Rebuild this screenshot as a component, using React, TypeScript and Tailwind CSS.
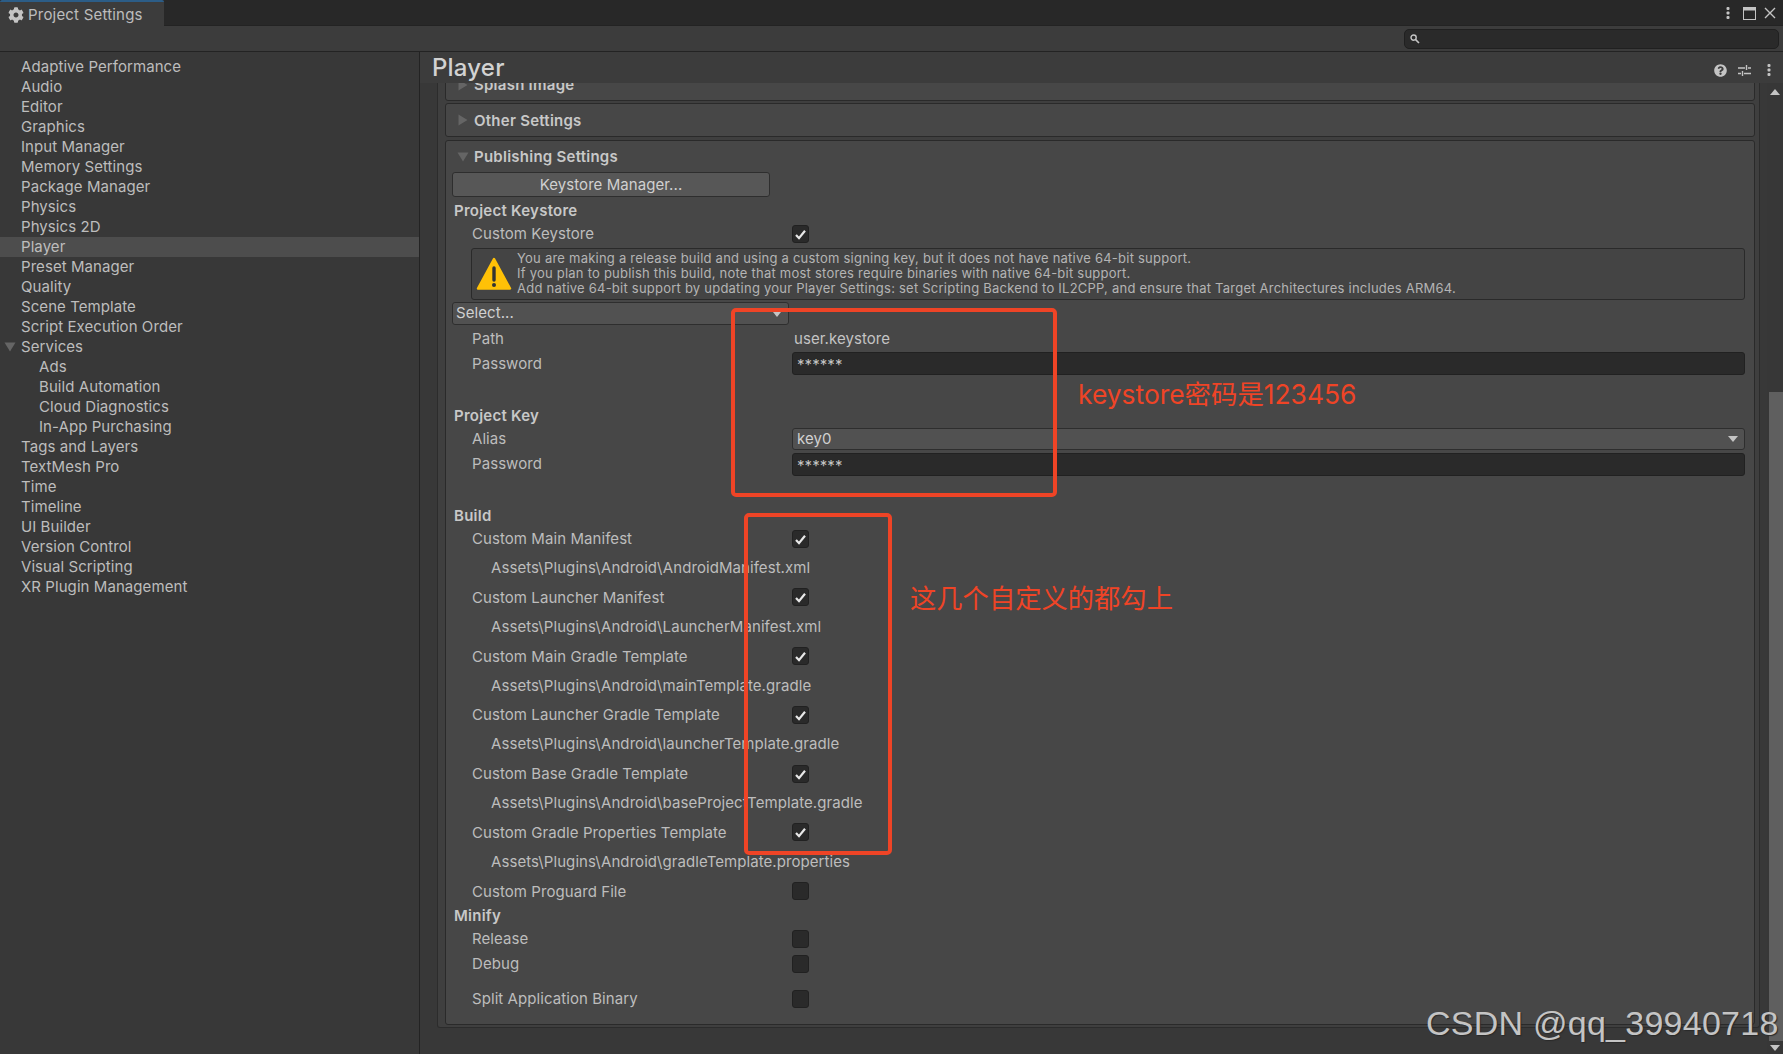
import React from "react";
import { FaCog, FaQuestionCircle } from "react-icons/fa";

const items: [string, number][] = [
  ["Adaptive Performance", 0], ["Audio", 0], ["Editor", 0], ["Graphics", 0], ["Input Manager", 0],
  ["Memory Settings", 0], ["Package Manager", 0], ["Physics", 0], ["Physics 2D", 0], ["Player", 0],
  ["Preset Manager", 0], ["Quality", 0], ["Scene Template", 0], ["Script Execution Order", 0], ["Services", 0],
  ["Ads", 1], ["Build Automation", 1], ["Cloud Diagnostics", 1], ["In-App Purchasing", 1],
  ["Tags and Layers", 0], ["TextMesh Pro", 0], ["Time", 0], ["Timeline", 0], ["UI Builder", 0],
  ["Version Control", 0], ["Visual Scripting", 0], ["XR Plugin Management", 0],
];

const Kebab = () => (
  <svg width="4" height="14" viewBox="0 0 4 14" className="fill-[#c4c4c4]">
    <rect x="0.5" y="1" width="3" height="3" rx="1" />
    <rect x="0.5" y="5.5" width="3" height="3" rx="1" />
    <rect x="0.5" y="10" width="3" height="3" rx="1" />
  </svg>
);

const Tri = ({ open }: { open?: boolean }) => (
  <svg width="12" height="12" viewBox="0 0 12 12" className="fill-[#656565] shrink-0">
    {open ? <path d="M0.5 1.5H11.5L6 10.5Z" /> : <path d="M1.5 0.5V11.5L10.5 6Z" />}
  </svg>
);

const Check = ({ on }: { on?: boolean }) => (
  <div className="w-[17px] h-[18px] rounded-[3px] bg-[#2a2a2a] border border-[#212121] flex items-center justify-center">
    {on && (
      <svg width="13" height="13" viewBox="0 0 13 13" fill="none" stroke="#e8e8e8" strokeWidth="2.2">
        <path d="M2 7L5 10.2L11 2.8" />
      </svg>
    )}
  </div>
);

const Label = ({ children, cls }: { children: React.ReactNode; cls: string }) => (
  <div className={`h-5 flex items-center whitespace-nowrap ${cls}`}>{children}</div>
);

const CheckRow = ({ text, on, cls, tcls = "" }: { text: string; on?: boolean; cls: string; tcls?: string }) => (
  <div className={`h-5 flex items-center ${cls}`}>
    <div className={`w-[340px] shrink-0 pl-[20px] whitespace-nowrap ${tcls}`}>{text}</div>
    <Check on={on} />
  </div>
);

const PathRow = ({ text, cls }: { text: string; cls: string }) => (
  <div className={`h-5 flex items-center pl-[39px] whitespace-nowrap ${cls}`}>{text}</div>
);

const PasswordRow = ({ cls, tcls = "" }: { cls: string; tcls?: string }) => (
  <div className={`h-[23px] flex items-center mr-[9px] ${cls}`}>
    <div className={`w-[340px] shrink-0 pl-[20px] ${tcls}`}>Password</div>
    <div className="flex-1 h-full rounded-[3px] bg-[#2a2a2a] border border-[#212121] pl-[4px] pt-[3px] flex items-start text-[#c4c4c4] text-[15px] leading-[18px]">******</div>
  </div>
);

export default function App() {
  return (
    <div className="relative w-[1783px] h-[1054px] overflow-hidden bg-[#383838] text-[#bdbdbd] text-[15px] tracking-[0.07px] font-['Inter','Noto_Sans_CJK_SC',sans-serif]">
      {/* title bar */}
      <div className="h-[26px] bg-[#282828] border-b border-[#232323] flex items-start justify-between">
        <div className="relative w-[164px] h-[26px] bg-[#3c3c3c] flex items-center pl-[8px] gap-[4px] border-t-[2px] border-[#2c5d87] rounded-t-[2px]">
          <FaCog className="text-[#c4c4c4] w-[16px] h-[16px] mt-[2px]" />
          <span className="text-[15px] tracking-[0.2px] pt-[3px]">Project Settings</span>
        </div>
        <div className="flex items-center h-[26px] pr-[7px]">
          <Kebab />
          <svg width="13" height="13" viewBox="0 0 13 13" className="ml-[13px]" fill="none">
            <rect x="0.5" y="0.5" width="12" height="12" stroke="#c4c4c4" />
            <rect x="0.5" y="0.5" width="12" height="3" fill="#c4c4c4" />
          </svg>
          <svg width="12" height="12" viewBox="0 0 12 12" className="ml-[8px]" fill="none" stroke="#c4c4c4" strokeWidth="1.4">
            <path d="M1 1L11 11M11 1L1 11" />
          </svg>
        </div>
      </div>
      {/* toolbar */}
      <div className="h-[26px] bg-[#3c3c3c] border-b border-[#232323] flex items-center justify-end pr-[4px]">
        <div className="w-[375px] h-[20px] rounded-[5px] bg-[#2a2a2a] border border-[#202020] flex items-center pl-[5px]">
          <svg width="10" height="10" viewBox="0 0 10 10" fill="none" stroke="#c4c4c4">
            <circle cx="3.6" cy="3.6" r="2.6" strokeWidth="1.4" />
            <path d="M5.6 5.6L9 9" strokeWidth="1.6" />
          </svg>
        </div>
      </div>
      <div className="flex h-[1002px]">
        {/* sidebar */}
        <div className="w-[420px] shrink-0 border-r border-[#232323] pt-[5px]">
          {items.map(([name, depth]) => (
            <div
              key={name}
              className={`relative h-5 flex items-center whitespace-nowrap ${name === "Player" ? "bg-[#4d4d4d]" : ""} ${depth ? "pl-[39px]" : "pl-[21px]"}`}
            >
              {name === "Services" && (
                <span className="absolute left-[4px] top-[4px]"><Tri open /></span>
              )}
              {name}
            </div>
          ))}
        </div>
        {/* main */}
        <div className="flex-1 flex flex-col min-w-0">
          <div className="h-[31px] shrink-0 bg-[#3c3c3c] flex items-center justify-between pl-[12px] pr-[12px]">
            <span className="text-[24px] font-medium tracking-[0.2px] text-[#d2d2d2] leading-[31px]">Player</span>
            <div className="flex items-center mt-[5px]">
              <FaQuestionCircle className="w-[13px] h-[13px] text-[#c4c4c4]" />
              <svg width="13" height="13" viewBox="0 0 13 13" className="ml-[11px]" fill="none" stroke="#c4c4c4" strokeWidth="1.4">
                <path d="M0 4H7M10 4H13M8.5 1V6M0 9.5H3M6 9.5H13M4.5 7V12" />
              </svg>
              <span className="ml-[16px]"><Kebab /></span>
            </div>
          </div>
          <div className="flex-1 flex min-h-0 overflow-hidden">
            <div className="flex-1 min-w-0 pl-[17px] pr-[7px]">
              <div className="h-[960px] -mt-[15px] bg-[#3f3f3f] border-x border-b border-[#2c2c2c] rounded-b-[3px] pl-[7px] pr-[4px]">
                <div className="h-[33px] bg-[#474747] border border-[#2a2a2a] rounded-[3px] flex items-center pl-[11px] gap-[5px] font-semibold tracking-[0.25px] text-[#c8c8c8]">
                  <Tri /> <span className="pt-[2px]">Splash Image</span>
                </div>
                <div className="h-[34px] mt-[2px] bg-[#474747] border border-[#2a2a2a] rounded-[3px] flex items-center pl-[11px] gap-[5px] font-semibold tracking-[0.25px] text-[#c8c8c8]">
                  <Tri /> <span className="pt-[2px]">Other Settings</span>
                </div>
                <div className="relative h-[885px] mt-[3px] bg-[#474747] border border-[#2a2a2a] rounded-[3px] pl-[6px]">
                  <div className="pt-[6px] h-[26px] flex items-center pl-[5px] gap-[5px] font-semibold tracking-[0.25px] text-[#c8c8c8] whitespace-nowrap">
                    <Tri open /> Publishing Settings
                  </div>
                  <div className="mt-[5px] w-[318px] h-[25px] pt-[2px] rounded-[3px] bg-[#575757] border border-[#2e2e2e] flex items-center justify-center text-[#d0d0d0]">Keystore Manager...</div>
                  <Label cls="mt-[3px] pl-[2px] pt-[2px] font-semibold tracking-[0.25px] text-[#c8c8c8]">Project Keystore</Label>
                  <CheckRow cls="mt-[4px]" text="Custom Keystore" on />
                  <div className="mt-[4px] ml-[19px] mr-[9px] h-[52px] rounded-[3px] border border-[#2a2a2a] bg-[#444444] flex items-center">
                    <svg width="36" height="36" viewBox="0 0 36 36" className="ml-[4px] shrink-0">
                      <path d="M18 3L34 32.5H2Z" fill="#ffc107" stroke="#ffc107" strokeWidth="2.5" strokeLinejoin="round" />
                      <path d="M18 12V24" stroke="#333" strokeWidth="3.4" strokeLinecap="round" />
                      <circle cx="18" cy="29" r="2" fill="#333" />
                    </svg>
                    <div className="ml-[5px] -mt-[2px] text-[13px] leading-[15px] tracking-[0.23px] whitespace-nowrap text-[#b4b4b4]">
                      <div>You are making a release build and using a custom signing key, but it does not have native 64-bit support.</div>
                      <div>If you plan to publish this build, note that most stores require binaries with native 64-bit support.</div>
                      <div>Add native 64-bit support by updating your Player Settings: set Scripting Backend to IL2CPP, and ensure that Target Architectures includes ARM64.</div>
                    </div>
                  </div>
                  <div className="relative mt-[2px] w-[337px] h-[23px] rounded-[3px] bg-[#515151] border border-[#2e2e2e] flex items-center pl-[3px] text-[#d0d0d0]">
                    Select...
                    <svg width="8" height="5" viewBox="0 0 8 5" className="absolute right-[7px] top-[9px] fill-[#c4c4c4]"><path d="M0 0H8L4 5Z" /></svg>
                  </div>
                  <div className="mt-[4px] h-5 flex items-center">
                    <div className="w-[340px] shrink-0 pl-[20px]">Path</div>
                    <div className="pl-[2px] text-[#c4c4c4]">user.keystore</div>
                  </div>
                  <PasswordRow cls="mt-[3px]" tcls="pt-[2px]" />
                  <Label cls="mt-[31px] pl-[2px] font-semibold tracking-[0.25px] text-[#c8c8c8]">Project Key</Label>
                  <div className="mt-[2px] h-[22px] flex items-center mr-[9px]">
                    <div className="w-[340px] shrink-0 pl-[20px]">Alias</div>
                    <div className="relative flex-1 h-full rounded-[3px] bg-[#515151] border border-[#2e2e2e] pl-[4px] flex items-center text-[#d0d0d0]">
                      key0
                      <svg width="10" height="6" viewBox="0 0 10 6" className="absolute right-[6px] top-[7px] fill-[#c4c4c4]"><path d="M0 0H10L5 6Z" /></svg>
                    </div>
                  </div>
                  <PasswordRow cls="mt-[3px]" />
                  <Label cls="mt-[30px] pl-[2px] font-semibold tracking-[0.25px] text-[#c8c8c8]">Build</Label>
                  <CheckRow cls="mt-[3px]" text="Custom Main Manifest" on />
                  <PathRow cls="mt-[9px]" text="Assets\Plugins\Android\AndroidManifest.xml" />
                  <CheckRow cls="mt-[9px]" tcls="pt-[2px]" text="Custom Launcher Manifest" on />
                  <PathRow cls="mt-[10px]" text="Assets\Plugins\Android\LauncherManifest.xml" />
                  <CheckRow cls="mt-[9px]" tcls="pt-[2px]" text="Custom Main Gradle Template" on />
                  <PathRow cls="mt-[9px] pt-[2px]" text="Assets\Plugins\Android\mainTemplate.gradle" />
                  <CheckRow cls="mt-[10px]" text="Custom Launcher Gradle Template" on />
                  <PathRow cls="mt-[9px]" text="Assets\Plugins\Android\launcherTemplate.gradle" />
                  <CheckRow cls="mt-[10px]" text="Custom Base Gradle Template" on />
                  <PathRow cls="mt-[9px]" text="Assets\Plugins\Android\baseProjectTemplate.gradle" />
                  <CheckRow cls="mt-[9px]" tcls="pt-[2px]" text="Custom Gradle Properties Template" on />
                  <PathRow cls="mt-[10px]" text="Assets\Plugins\Android\gradleTemplate.properties" />
                  <CheckRow cls="mt-[9px]" tcls="pt-[2px]" text="Custom Proguard File" />
                  <Label cls="mt-[5px] pl-[2px] font-semibold tracking-[0.25px] text-[#c8c8c8]">Minify</Label>
                  <CheckRow cls="mt-[3px]" text="Release" />
                  <CheckRow cls="mt-[5px]" text="Debug" />
                  <CheckRow cls="mt-[15px]" text="Split Application Binary" />
                </div>
              </div>
            </div>
            {/* scrollbar */}
            <div className="w-[16px] shrink-0 bg-[#373737] flex flex-col items-center relative">
              <svg width="10" height="6" viewBox="0 0 10 6" className="mt-[6px] fill-[#c4c4c4]"><path d="M0 6H10L5 0Z" /></svg>
              <div className="absolute left-[2px] right-0 top-[309px] bottom-[13px] bg-[#5f5f5f]" />
              <svg width="10" height="6" viewBox="0 0 10 6" className="absolute bottom-[3px] fill-[#c4c4c4]"><path d="M0 0H10L5 6Z" /></svg>
            </div>
          </div>
        </div>
      </div>

      {/* annotations */}
      <div className="absolute left-[731px] top-[308px] w-[326px] h-[189px] border-[4px] border-[#ef4426] rounded-[5px]" />
      <div className="absolute left-[744px] top-[513px] w-[148px] h-[342px] border-[4px] border-[#ef4426] rounded-[5px]" />
      <div className="absolute left-[1078px] top-[377px] text-[26.4px] leading-[34px] tracking-normal text-[#ef4426] whitespace-nowrap">keystore密码是123456</div>
      <div className="absolute left-[910px] top-[583px] text-[26.3px] leading-[32px] tracking-normal text-[#ef4426] whitespace-nowrap">这几个自定义的都勾上</div>
      <div className="absolute left-[1426px] top-[1002px] text-[34px] leading-[42px] tracking-[0.25px] font-['Liberation_Sans',sans-serif] text-[#c4c4c4] whitespace-nowrap [text-shadow:1px_1px_1px_#2a2a2a]">CSDN @qq_39940718</div>
    </div>
  );
}
